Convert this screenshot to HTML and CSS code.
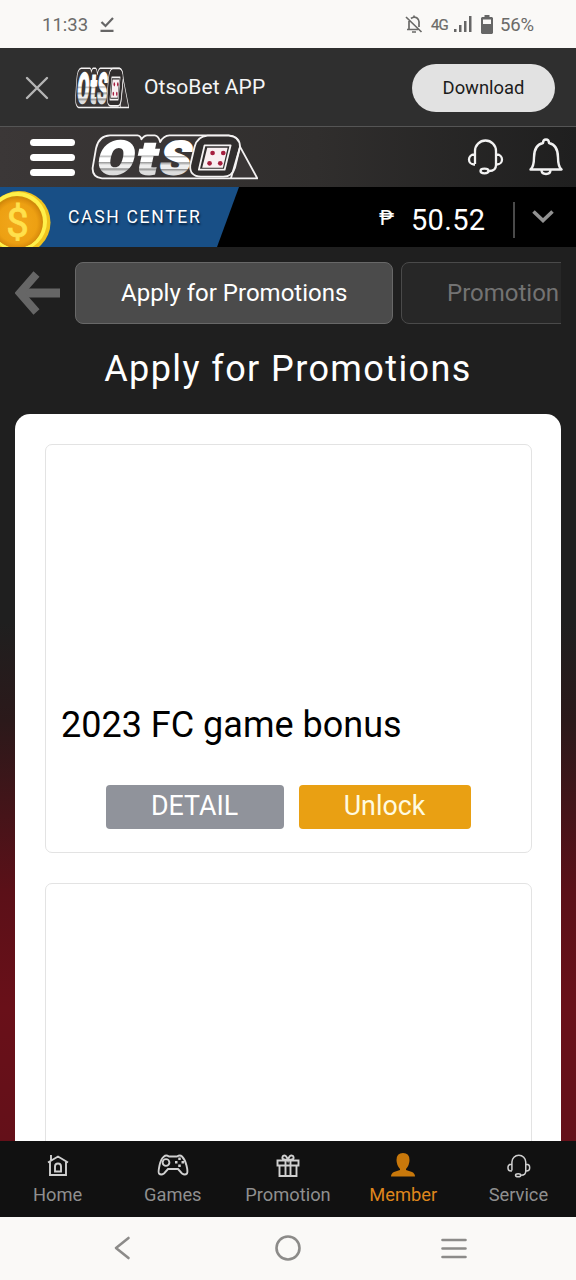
FILE: index.html
```html
<!DOCTYPE html>
<html lang="en">
<head>
<meta charset="utf-8">
<title>OtsoBet</title>
<link rel="stylesheet" href="styles.css">
</head>
<body>
<svg class="defs" aria-hidden="true">
  <defs>
    <linearGradient id="metal" x1="0" y1="0" x2="0" y2="1">
      <stop offset="0" stop-color="#fff"/><stop offset=".45" stop-color="#fff"/>
      <stop offset=".46" stop-color="#aaa"/><stop offset=".5" stop-color="#fff"/>
      <stop offset=".57" stop-color="#fff"/><stop offset=".58" stop-color="#999"/><stop offset=".63" stop-color="#eee"/>
      <stop offset=".69" stop-color="#eee"/><stop offset=".7" stop-color="#888"/><stop offset=".75" stop-color="#ddd"/>
      <stop offset=".82" stop-color="#ddd"/><stop offset=".83" stop-color="#888"/><stop offset="1" stop-color="#ccc"/>
    </linearGradient>
    <radialGradient id="gold"><stop offset="0" stop-color="#f2a71b"/><stop offset=".8" stop-color="#eda012"/><stop offset="1" stop-color="#d98b0c"/></radialGradient>
    <symbol id="logo" viewBox="273 42 500 138" preserveAspectRatio="none">
      <g fill="none" stroke="#f4f2f2" stroke-width="5.500" stroke-linejoin="round">
        <path fill="#3a3636" d="M306 175q-30-3-28-32l10-58q8-38 42-39h82q10 1 12 12 8-12 18-12h22q12 2 16 20 10-19 28-20h177q28 2 32 30l54 99z"/>
        <path fill="#302d2d" d="M622 47h63q34 2 34 34l-15 62q-8 27-35 27h-67q-34-1-32-34l13-55q8-32 39-34z"/>
        <path d="M719 82l-27 93"/>
        <path d="M613 76h78l-18 73h-77z"/>
      </g>
      <path fill="#f8eff1" d="M621 83h61l-14 60h-62z"/>
      <g fill="#a51f3f"><circle cx="637" cy="99" r="7"/><circle cx="669" cy="99" r="7"/><circle cx="628" cy="130" r="7"/><circle cx="660" cy="130" r="7"/></g>
      <g class="logo-letters" fill="url(#metal)" stroke="url(#metal)" stroke-width="6" transform="translate(0 161) skewX(-12)">
        <text transform="translate(286 0) scale(1.140 1)">O</text>
        <text transform="translate(404 0) scale(1.250 1)">t</text>
        <text transform="translate(473 0) scale(1.060 1)">S</text>
      </g>
    </symbol>
    <symbol id="headset" viewBox="0 0 38 38">
      <g fill="none" stroke="currentColor" stroke-width="2.300">
        <path d="M9 26V13a10.500 10.500 0 0 1 21 0v14q0 6-7 6M9 16.500h-1a5 5 0 0 0 0 10h1M30 16.500h1a5 5 0 0 1 0 10h-1"/>
        <ellipse cx="18.500" cy="33" rx="4" ry="2.300"/>
      </g>
    </symbol>
  </defs>
</svg>

<div class="screen">
  <div class="status">
    <span class="time">11:33</span>
    <svg class="check" width="14" height="17" viewBox="0 0 14 17" fill="none" stroke="#666" stroke-width="2.200"><path d="M1.500 6l4 4L13 2M.5 14.800h13"/></svg>
    <span class="grow"></span>
    <svg width="18" height="19" viewBox="0 0 18 19" fill="none" stroke="#6a6a68" stroke-width="1.700"><path d="M1 2l15.500 15M4 6v8M2 14.500h11M6 3.500q3-2.500 6-.5 2.500 2 2 5v4M9 .5v2M7 17h4"/></svg>
    <span class="net">4G</span>
    <svg class="bars" width="18" height="17" viewBox="0 0 18 17" fill="#666"><path d="M0 13h2.500v3H0zM5 9h2.500v7H5zM10 5h2.500v11H10zM15 0h2.500v16H15z"/></svg>
    <svg class="battery" width="12" height="19" viewBox="0 0 12 19"><path fill="#666" fill-rule="evenodd" d="M3.500 0h5v2H11l1 1v15l-1 1H1l-1-1V3l1-1h2.500zM2 4.500V9h8V4.500z"/></svg>
    <span class="pct">56%</span>
  </div>

  <div class="banner">
    <svg class="close" width="24" height="24" viewBox="0 0 24 24" stroke="#b5b5b5" stroke-width="2.400" stroke-linecap="round"><path d="M2 2l20 20M22 2L2 22"/></svg>
    <svg class="logo-small" width="54" height="42"><use href="#logo" width="54" height="42"/></svg>
    <span class="app-name">OtsoBet APP</span>
    <span class="grow"></span>
    <button class="download">Download</button>
  </div>

  <header class="header">
    <div class="burger"><i></i><i></i><i></i></div>
    <svg class="logo-main" width="167" height="46"><use href="#logo" width="167" height="46"/></svg>
    <span class="grow"></span>
    <svg class="support" width="38" height="38"><use href="#headset"/></svg>
    <svg class="bell" width="34" height="38" viewBox="0 0 34 38" fill="none" stroke="currentColor" stroke-width="2.400" stroke-linejoin="round"><path d="M1.500 31.500Q5 28.500 5 19.500 5 7 14 5q0-3.500 3-3.500T20 5q9 2 9 14.500 0 9 3.500 12zM12.500 32q0 4 4.500 4t4.500-4"/></svg>
  </header>

  <div class="cash">
    <div class="cash-center">
      <svg class="coin" width="52" height="58" viewBox="0 0 52 58">
        <circle cx="19" cy="33.500" r="31.500" fill="#f0c31e"/>
        <circle cx="17.500" cy="32.500" r="29.500" fill="#fff04a"/>
        <circle cx="17" cy="33" r="26" fill="#d18b0b"/>
        <circle cx="17" cy="34" r="25" fill="url(#gold)"/>
        <text class="dollar" x="17.500" y="48" text-anchor="middle">$</text>
      </svg>
      <span class="cash-label">CASH CENTER</span>
    </div>
    <span class="grow"></span>
    <span class="peso">₱</span>
    <span class="amount">50.52</span>
    <span class="rule"></span>
    <svg width="22" height="16" viewBox="0 0 22 16" fill="none" stroke="#929292" stroke-width="3.600"><path d="M1.500 2.500L11 11.500l9.500-9"/></svg>
  </div>

  <main class="main">
    <div class="tabs">
      <svg class="back" width="46" height="44" viewBox="0 0 46 44" fill="none" stroke="#666"><path stroke-width="9" d="M45 22H6"/><path stroke-width="8" d="M21.500 3L4.800 22l16.700 19"/></svg>
      <div class="tab-list">
        <div class="tab active">Apply for Promotions</div>
        <div class="tab">Promotion</div>
      </div>
    </div>
    <h1 class="title">Apply for Promotions</h1>
    <section class="panel">
      <article class="card">
        <div class="picture"></div>
        <h2 class="card-title">2023 FC game bonus</h2>
        <div class="actions">
          <button class="btn detail">DETAIL</button>
          <button class="btn unlock">Unlock</button>
        </div>
      </article>
      <article class="card"></article>
    </section>
  </main>

  <nav class="nav">
    <div class="nav-item">
      <svg width="24" height="26" viewBox="0 0 24 26" fill="none" stroke="currentColor" stroke-width="1.900"><path d="M2 9.500l10-6 10 6M5 2v5M4 9v13h16V9M9 18.500v-5a3 3 0 0 1 6 0v5z"/></svg>
      <span>Home</span>
    </div>
    <div class="nav-item">
      <svg width="32" height="26" viewBox="0 0 32 26" fill="none" stroke="currentColor" stroke-width="1.900"><path d="M7 3.500q2-2 5 0h8q3-2 5 0 3 3 4.500 9T30 20.500q-2 2-5 0L21 16H11l-4 4.500q-3 2-5 0-1-1 .5-8T7 3.500z"/><circle cx="9" cy="9.500" r="3.400"/><path d="M22.500 4.500V7M22.500 11.500V14M18 9.300h2.500M24.500 9.300H27" stroke-width="2.500"/></svg>
      <span>Games</span>
    </div>
    <div class="nav-item">
      <svg width="26" height="26" viewBox="0 0 26 26" fill="none" stroke="currentColor" stroke-width="1.900"><path d="M2.500 7.500h21v5h-21zM4.500 12.500h17v10.500h-17zM10.500 8v15M15.500 8v15M13 7Q5.500 7 8 3q3-2 5 4 1.500-6 5-4 2.500 4-5 4"/></svg>
      <span>Promotion</span>
    </div>
    <div class="nav-item current">
      <svg width="26" height="26" viewBox="0 0 26 26" fill="#c8780b"><path d="M13 0q6.500 0 6.500 7 0 5-3.500 9v1l6 2q3 1.500 3 4.500H1Q1 20.500 4 19l6-2v-1Q6.500 12 6.500 7q0-7 6.500-7z"/></svg>
      <span>Member</span>
    </div>
    <div class="nav-item">
      <svg width="25" height="26" viewBox="0 0 38 38"><use href="#headset" width="38" height="38"/></svg>
      <span>Service</span>
    </div>
  </nav>

  <div class="system">
    <svg width="28" height="28" viewBox="0 0 28 28"><path d="M20.500 4L8 14l12.500 10"/></svg>
    <svg width="28" height="28" viewBox="0 0 28 28"><circle cx="14" cy="14" r="11.500"/></svg>
    <svg width="28" height="28" viewBox="0 0 28 28"><path d="M2.500 6h23M2.500 14.500h23M2.500 23h23"/></svg>
  </div>
</div>
</body>
</html>
```

FILE: styles.css
```css
* { box-sizing: border-box; }
body { margin: 0; font-family: Roboto, "Liberation Sans", sans-serif; }
h1, h2 { margin: 0; font-weight: 400; }
button { border: 0; padding: 0; font-family: inherit; }
svg { flex: none; display: block; }
.defs { position: absolute; width: 0; height: 0; }
.grow { flex: 1; }
.screen { width: 576px; height: 1280px; overflow: hidden; display: flex; flex-direction: column; }

.status { height: 48px; flex: none; display: flex; align-items: center; padding: 2px 42px 0; background: #faf9f7; color: #6b6b69; font-size: 18.5px; }
.status svg { margin-bottom: 2px; }
.check { margin-left: 12px; }
.net { margin-left: 8px; font-size: 15px; letter-spacing: -.8px; -webkit-text-stroke: .2px; }
.bars { margin-left: 6px; }
.battery { margin-left: 9px; }
.pct { margin-left: 7px; width: 34px; letter-spacing: -.2px; }

.banner { height: 78px; flex: none; display: flex; align-items: center; padding: 2px 21px 0 25px; background: #2f2f2f; color: #f5f5f5; }
.logo-small { margin-left: 26px; }
.app-name { margin-left: 15px; font-size: 21px; letter-spacing: .05px; padding-bottom: 3px; }
.download { width: 143px; height: 48px; padding-bottom: 1px; border-radius: 24px; background: #e2e2e2; color: #1c1c1c; font-size: 18.4px; }
.logo-letters { font: 900 138px Roboto, sans-serif; }

.header { height: 61px; flex: none; display: flex; align-items: center; padding: 0 13px 0 30px; border-top: 1px solid #555; background: linear-gradient(90deg, #3b3737, #302e2d 55%, #1f1f1f); color: #f2f2f2; }
.burger { width: 45px; height: 37px; display: flex; flex-direction: column; justify-content: space-between; }
.burger i { height: 7px; border-radius: 4px; background: #fff; }
.logo-main { margin-left: 16px; }
.bell { margin-left: 25px; }

.cash { height: 60px; flex: none; display: flex; align-items: center; padding-right: 22px; background: #000; color: #fff; }
.cash-center { width: 239px; height: 60px; display: flex; align-items: center; background: #184f86; clip-path: polygon(0 0, 100% 0, 217px 100%, 0 100%); }
.coin { align-self: flex-end; }
.dollar { font: 40px Roboto, sans-serif; fill: #ffe04c; stroke: #ffe04c; stroke-width: .8; }
.cash-label { margin-left: 16px; font-size: 17.500px; letter-spacing: 1.700px; text-shadow: 1px 2px 2px #06213f; }
.peso { font-size: 20px; padding-top: 1px; -webkit-text-stroke: .2px; }
.amount { margin-left: 17px; width: 86px; font-size: 29px; padding-top: 5px; letter-spacing: .3px; }
.rule { margin: 6px 17px 0 16px; width: 2px; height: 36px; background: #4a4a4a; }

.main { flex: 1; min-height: 0; overflow: hidden; padding: 15px 15px 0; background: linear-gradient(#1f1f1f 0, #1f1f1f 42%, #2b191a 53%, #5b1018 72%, #691019 85%, #641019 100%); }
.tabs { display: flex; align-items: center; height: 62px; }
.tab-list { flex: 1; margin-left: 14px; display: flex; gap: 8px; overflow: hidden; }
.tab { flex: none; width: 318px; height: 62px; padding-left: 45px; border: 1px solid #4a4a4a; border-radius: 8px; background: #272727; color: #737373; font-size: 24px; line-height: 60px; }
.tab.active { border-color: #686868; background: #4b4b4b; color: #fff; }
.title { height: 90px; padding-top: 2px; color: #fff; font-size: 36px; line-height: 86px; letter-spacing: 1.400px; text-align: center; }
.panel { min-height: 760px; padding: 30px 29.5px; border-radius: 15px 15px 0 0; background: #fff; display: flex; flex-direction: column; gap: 30px; }
.card { height: 409px; border: 1px solid #e3e3e3; border-radius: 7px; }
.picture { height: 254px; }
.card-title { height: 86px; padding-left: 15.5px; font-size: 36px; line-height: 52px; color: #000; }
.actions { display: flex; gap: 15px; padding-left: 60px; }
.btn { height: 44px; padding-bottom: 2px; border-radius: 4px; font-size: 26.8px; }
.detail { width: 178px; background: #90939b; color: #fff; }
.unlock { width: 172px; background: #e9a013; color: #fffbe0; }

.nav { height: 76px; flex: none; display: grid; grid-template-columns: repeat(5, 1fr); padding-top: 12px; background: #111; color: #d0d0d0; }
.nav-item { display: flex; flex-direction: column; align-items: center; gap: 4px; }
.nav-item span { color: #8f8f8f; font-size: 18.3px; line-height: 23px; }
.nav-item.current span { color: #df861c; }
.system { height: 63px; flex: none; display: flex; align-items: center; justify-content: space-between; padding: 0 108px 1px; background: #faf9f7; }
.system svg { fill: none; stroke: #8c8b89; stroke-width: 2.600; stroke-linecap: round; stroke-linejoin: round; }
```
